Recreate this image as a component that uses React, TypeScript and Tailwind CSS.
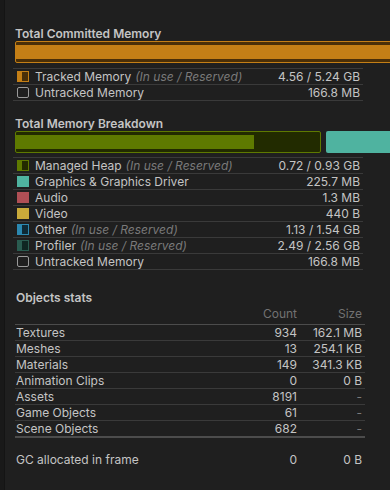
import React from "react"

type Swatch = { fill: string; dark?: string; border: string; split?: boolean; empty?: boolean }

type MemRow = { label: string; note?: boolean; value: string; swatch: Swatch }

const committedRows: MemRow[] = [
  { label: "Tracked Memory", note: true, value: "4.56 / 5.24 GB", swatch: { fill: "bg-[#c47f16]", dark: "bg-[#4a2f08]", border: "border-[#c47f16]", split: true } },
  { label: "Untracked Memory", value: "166.8 MB", swatch: { fill: "bg-transparent", border: "border-[#9a9a9a]", empty: true } },
]

const breakdownRows: MemRow[] = [
  { label: "Managed Heap", note: true, value: "0.72 / 0.93 GB", swatch: { fill: "bg-[#5e7a00]", dark: "bg-[#222b00]", border: "border-[#5e7a00]", split: true } },
  { label: "Graphics & Graphics Driver", value: "225.7 MB", swatch: { fill: "bg-[#4fb3a0]", border: "border-[#4fb3a0]" } },
  { label: "Audio", value: "1.3 MB", swatch: { fill: "bg-[#b04f55]", border: "border-[#b04f55]" } },
  { label: "Video", value: "440 B", swatch: { fill: "bg-[#c9aa3a]", border: "border-[#c9aa3a]" } },
  { label: "Other", note: true, value: "1.13 / 1.54 GB", swatch: { fill: "bg-[#2b88b0]", dark: "bg-[#0e2a36]", border: "border-[#2b88b0]", split: true } },
  { label: "Profiler", note: true, value: "2.49 / 2.56 GB", swatch: { fill: "bg-[#2a5c50]", dark: "bg-[#0f2622]", border: "border-[#2a5c50]", split: true } },
  { label: "Untracked Memory", value: "166.8 MB", swatch: { fill: "bg-transparent", border: "border-[#9a9a9a]", empty: true } },
]

const objectRows = [
  ["Textures", "934", "162.1 MB"],
  ["Meshes", "13", "254.1 KB"],
  ["Materials", "149", "341.3 KB"],
  ["Animation Clips", "0", "0 B"],
  ["Assets", "8191", "-"],
  ["Game Objects", "61", "-"],
  ["Scene Objects", "682", "-"],
]

function SwatchBox({ s }: { s: Swatch }) {
  if (s.split) {
    return (
      <span className={`flex w-[12px] h-[11px] border ${s.border} ${s.dark}`}>
        <span className={`w-[4px] h-full ${s.fill}`} />
      </span>
    )
  }
  if (s.empty) {
    return <span className={`block w-[12px] h-[11px] border rounded-[2px] ${s.border}`} />
  }
  return <span className={`block w-[12px] h-[11px] ${s.fill}`} />
}

function MemList({ rows }: { rows: MemRow[] }) {
  return (
    <div className="w-[350px] -ml-[2px] border-t border-[#3a3a3a]">
      {rows.map((r) => (
        <div key={r.label} className="flex items-center h-[16px] border-b border-[#3a3a3a] pl-[4px] pr-[3px]">
          <SwatchBox s={r.swatch} />
          <span className="ml-[6px] text-[#c4c4c4]">{r.label}</span>
          {r.note && <span className="ml-[4px] italic text-[#7a7a7a]">(In use / Reserved)</span>}
          <span className="ml-auto text-[#c4c4c4]">{r.value}</span>
        </div>
      ))}
    </div>
  )
}

export default function App() {
  return (
    <main className="flex w-[390px] h-[490px] overflow-hidden bg-[#1f1f1f] text-[12px] leading-[15px] font-['Inter','Liberation_Sans',sans-serif]">
      {/* left dock edge */}
      <div className="w-[5px] shrink-0 bg-[#191919] border-r border-[#141414]" />

      <div className="flex flex-col pl-[10px] pt-[27px] min-w-0">
        {/* Committed */}
        <h2 className="h-[14px] leading-[14px] font-semibold text-[#c4c4c4]">Total Committed Memory</h2>
        <div className="flex items-center w-[440px] h-[22px] border border-[#c47f16] bg-[#4a2f08] rounded-[2px]">
          <div className="h-[14px] w-[87%] bg-[#c47f16]" />
        </div>
        <div className="mt-[5px]">
          <MemList rows={committedRows} />
        </div>

        {/* Breakdown */}
        <h2 className="mt-[16px] h-[14px] leading-[14px] font-semibold text-[#c4c4c4]">Total Memory Breakdown</h2>
        <div className="flex gap-[5px] w-[440px]">
          <div className="flex items-center w-[306px] h-[22px] border border-[#5e7a00] bg-[#222b00] rounded-[2px]">
            <div className="h-[14px] w-[238px] bg-[#5e7a00]" />
          </div>
          <div className="flex-1 h-[22px] bg-[#4fb3a0] rounded-[2px]" />
        </div>
        <div className="mt-[4px]">
          <MemList rows={breakdownRows} />
        </div>

        {/* Objects stats */}
        <h2 className="mt-[21px] h-[14px] leading-[14px] font-semibold text-[#c4c4c4] pl-px">Objects stats</h2>
        <div className="w-[350px]">
          <div className="grid grid-cols-[1fr_80px_68px] items-end h-[20px] pb-[3px] border-b border-[#4c4c4c] text-[#727272]">
            <span />
            <span className="text-right">Count</span>
            <span className="text-right pr-[3px]">Size</span>
          </div>
          {objectRows.map(([name, count, size], i) => (
            <div
              key={name}
              className={`grid grid-cols-[1fr_80px_68px] items-center text-[#c4c4c4] ${
                i === objectRows.length - 1 ? "border-b-2 border-[#4c4c4c] h-[17px]" : "border-b border-[#3a3a3a] h-[16px]"
              }`}
            >
              <span className="pl-px">{name}</span>
              <span className="text-right">{count}</span>
              <span className={`text-right pr-[3px] ${size === "-" ? "text-[#7a7a7a]" : ""}`}>{size}</span>
            </div>
          ))}
          <div className="mt-[14px] grid grid-cols-[1fr_80px_68px] h-[16px] leading-[16px] text-[#c4c4c4]">
            <span className="pl-px">GC allocated in frame</span>
            <span className="text-right">0</span>
            <span className="text-right pr-[3px]">0 B</span>
          </div>
        </div>
      </div>
    </main>
  )
}
